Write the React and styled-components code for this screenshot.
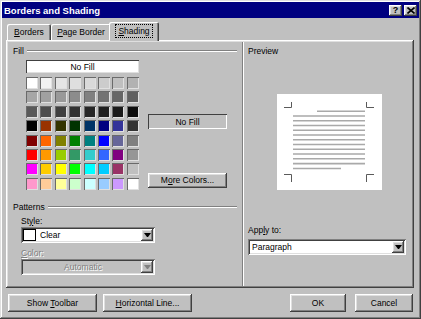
import React from 'react';
import styled, { createGlobalStyle, css } from 'styled-components';

const GlobalStyle = createGlobalStyle`
  html, body {
    margin: 0;
    padding: 0;
    background: #c0c0c0;
  }
  body {
    font-family: "Liberation Sans", Arial, sans-serif;
  }
`;

// classic 3d bevels
const raised = css`
  box-shadow: inset -1px -1px #404040, inset 1px 1px #fff,
    inset -2px -2px #808080, inset 2px 2px #dfdfdf;
`;

const sunken = css`
  box-shadow: inset 1px 1px #808080, inset -1px -1px #fff,
    inset 2px 2px #404040, inset -2px -2px #dfdfdf;
`;

const Window = styled.div`
  width: 421px;
  height: 319px;
  box-sizing: border-box;
  padding: 2px;
  background: #c0c0c0;
  box-shadow: inset -1px -1px #404040, inset 1px 1px #dfdfdf,
    inset -2px -2px #808080, inset 2px 2px #fff;
  display: flex;
  flex-direction: column;
  font-size: 8.5px;
  color: #000;
`;

const TitleBar = styled.div`
  height: 16px;
  background: #000080;
  color: #fff;
  display: flex;
  align-items: center;
  padding: 0 2px;
  font-size: 9.5px;
  font-weight: bold;
`;

const Title = styled.span`
  flex: 1;
`;

const CaptionButton = styled.div`
  width: 13px;
  height: 11px;
  margin-left: ${p => p.$gap || 0}px;
  background: #c0c0c0;
  ${raised};
  color: #000;
  font-size: 9px;
  font-weight: bold;
  display: flex;
  align-items: center;
  justify-content: center;
`;

const TabStrip = styled.div`
  height: 18px;
  margin: 4px 0 0 5px;
  display: flex;
  align-items: flex-end;
  position: relative;
  z-index: 1;
`;

const Tab = styled.div`
  width: ${p => p.$w}px;
  height: ${p => (p.$active ? 19 : 16)}px;
  margin: 0 ${p => (p.$active ? -2 : 0)}px ${p => (p.$active ? -1 : 0)}px
    ${p => (p.$active ? -2 : 0)}px;
  box-sizing: border-box;
  background: #c0c0c0;
  border-radius: 2px 2px 0 0;
  box-shadow: inset 1px 1px #fff, inset -1px 0 #404040, inset -2px 0 #808080;
  display: flex;
  align-items: center;
  justify-content: center;
  padding-bottom: ${p => (p.$active ? 1 : 0)}px;
`;

const FocusLabel = styled.span`
  outline: 1px dotted #000;
  padding: 1px 2px;
`;

const TabPanel = styled.div`
  margin-left: 4px;
  width: 408px;
  height: 248px;
  box-sizing: border-box;
  ${raised};
  display: flex;
`;

const LeftPane = styled.div`
  width: 236px;
  box-sizing: border-box;
  padding: 6px 3px 0 7px;
  display: flex;
  flex-direction: column;
`;

const RightPane = styled.div`
  flex: 1;
  margin: 2px 2px 2px 0;
  border-left: 1px solid #808080;
  box-shadow: inset 1px 0 #fff;
  padding: 4px 0 0 5px;
  display: flex;
  flex-direction: column;
`;

const GroupHeading = styled.div`
  height: 10px;
  margin-top: ${p => p.$mt || 0}px;
  display: flex;
  align-items: center;
  gap: 3px;
`;

const Rule = styled.div`
  flex: 1;
  margin-right: 2px;
  border-top: 1px solid #808080;
  border-bottom: 1px solid #fff;
`;

const FillBody = styled.div`
  margin-top: 4px;
  padding-left: 13px;
  display: flex;
`;

const SwatchColumn = styled.div`
  width: 113px;
  display: flex;
  flex-direction: column;
`;

const NoFillButton = styled.div`
  height: 13px;
  background: #fff;
  box-shadow: inset 1px 1px #404040, inset -1px -1px #dfdfdf;
  display: flex;
  align-items: center;
  justify-content: center;
`;

const SwatchGrid = styled.div`
  margin-top: 4px;
  display: grid;
  grid-template-columns: repeat(8, 12px);
  grid-auto-rows: 12px;
  gap: 2.4px;
`;

const Swatch = styled.div`
  background: ${p => p.$color};
  box-shadow: inset 1px 1px #6a6a6a, inset -1px -1px #e0e0e0;
`;

const SideColumn = styled.div`
  width: 79px;
  margin-left: 9px;
  padding-top: 54px;
  display: flex;
  flex-direction: column;
`;

const NoFillDisplay = styled.div`
  height: 15px;
  box-shadow: inset 1px 1px #404040, inset -1px -1px #fff;
  display: flex;
  align-items: center;
  justify-content: center;
`;

const PushButton = styled.div`
  width: ${p => (p.$w ? `${p.$w}px` : 'auto')};
  height: ${p => p.$h || 18}px;
  margin-top: ${p => (p.$auto ? 'auto' : '0')};
  margin-bottom: ${p => p.$mb || 0}px;
  margin-left: ${p => p.$ml || 0}px;
  box-sizing: border-box;
  background: #c0c0c0;
  ${raised};
  display: flex;
  align-items: center;
  justify-content: center;
`;

const SubBlock = styled.div`
  padding-left: 8px;
  display: flex;
  flex-direction: column;
`;

const FieldLabel = styled.div`
  height: 10px;
  margin-top: ${p => p.$mt || 0}px;
  display: flex;
  align-items: center;
  color: ${p => (p.$disabled ? '#808080' : '#000')};
  text-shadow: ${p => (p.$disabled ? '1px 1px #fff' : 'none')};
`;

const Combo = styled.div`
  width: ${p => p.$w}px;
  height: 16px;
  margin-top: ${p => p.$mt || 0}px;
  box-sizing: border-box;
  padding: 2px;
  background: ${p => (p.$disabled ? '#c0c0c0' : '#fff')};
  ${sunken};
  display: flex;
  align-items: center;
`;

const ComboText = styled.span`
  flex: 1;
  padding-left: ${p => p.$pl || 2}px;
  text-align: ${p => (p.$center ? 'center' : 'left')};
  color: ${p => (p.$disabled ? '#808080' : '#000')};
  text-shadow: ${p => (p.$disabled ? '1px 1px #fff' : 'none')};
`;

const PatternSwatch = styled.div`
  width: 11px;
  height: 10px;
  margin-left: 0;
  background: #fff;
  border: 1px solid #000;
`;

const DropButton = styled.div`
  width: 12px;
  height: 12px;
  background: #c0c0c0;
  ${raised};
  display: flex;
  align-items: center;
  justify-content: center;
`;

const Arrow = styled.div`
  width: 1px;
  height: 0;
  border-left: 3px solid transparent;
  border-right: 3px solid transparent;
  border-top: 4px solid ${p => (p.$disabled ? '#808080' : '#000')};
`;

const PreviewPage = styled.div`
  width: 105px;
  height: 96px;
  margin: 38px 0 0 29px;
  background: #fff;
`;

const ButtonRow = styled.div`
  margin-top: 6px;
  padding: 0 6px;
  display: flex;
`;

const Spacer = styled.div`
  flex: 1;
`;

const grays = [
  '#ffffff', '#f2f2f2', '#e5e5e5', '#dfdfdf', '#d9d9d9', '#cccccc', '#bfbfbf', '#b2b2b2',
  '#a6a6a6', '#a0a0a0', '#999999', '#8c8c8c', '#808080', '#737373', '#666666', '#606060',
  '#595959', '#4d4d4d', '#404040', '#333333', '#262626', '#202020', '#1a1a1a', '#0d0d0d',
];

const colors = [
  '#000000', '#993300', '#333300', '#003300', '#003366', '#000080', '#333399', '#333333',
  '#800000', '#ff6600', '#808000', '#008000', '#008080', '#0000ff', '#666699', '#808080',
  '#ff0000', '#ff9900', '#99cc00', '#339966', '#33cccc', '#3366ff', '#800080', '#969696',
  '#ff00ff', '#ffcc00', '#ffff00', '#00ff00', '#00ffff', '#00ccff', '#993366', '#c0c0c0',
  '#ff99cc', '#ffcc99', '#ffff99', '#ccffcc', '#ccffff', '#99ccff', '#cc99ff', '#ffffff',
];

const CloseGlyph = () => (
  <svg width="8" height="7" viewBox="0 0 8 7">
    <path d="M0.5 0.5 L7.5 6.5 M7.5 0.5 L0.5 6.5" stroke="#000" strokeWidth="1.6" />
  </svg>
);

const lineYs = [22, 26.8, 31.5, 36.3, 41, 45.8, 50.5, 55.3, 60, 64.8, 69.6];

const PageDrawing = () => (
  <svg width="105" height="96" viewBox="0 0 105 96">
    <g stroke="#5a5a5a" strokeWidth="1" fill="none">
      <path d="M7 13.5 H14.5 V8" />
      <path d="M89.5 8 V13.5 H97" />
      <path d="M7 80.5 H14.5 V88" />
      <path d="M89.5 88 V80.5 H97" />
    </g>
    <g stroke="#a9a9a9" strokeWidth="1.6">
      <line x1="40" y1="17.2" x2="88" y2="17.2" />
      {lineYs.map(y => (
        <line key={y} x1="16" y1={y} x2="88" y2={y} />
      ))}
      <line x1="16" y1="74.5" x2="64" y2="74.5" />
    </g>
  </svg>
);

export default function App() {
  return (
    <>
      <GlobalStyle />
      <Window>
        <TitleBar>
          <Title>Borders and Shading</Title>
          <CaptionButton>?</CaptionButton>
          <CaptionButton $gap={2}>
            <CloseGlyph />
          </CaptionButton>
        </TitleBar>

        <TabStrip>
          <Tab $w={44}>
            <span><u>B</u>orders</span>
          </Tab>
          <Tab $w={60}>
            <span><u>P</u>age Border</span>
          </Tab>
          <Tab $w={50} $active>
            <FocusLabel><u>S</u>hading</FocusLabel>
          </Tab>
        </TabStrip>

        <TabPanel>
          <LeftPane>
            <GroupHeading>
              <span>Fill</span>
              <Rule />
            </GroupHeading>
            <FillBody>
              <SwatchColumn>
                <NoFillButton>No Fill</NoFillButton>
                <SwatchGrid>
                  {[...grays, ...colors].map((c, i) => (
                    <Swatch key={i} $color={c} />
                  ))}
                </SwatchGrid>
              </SwatchColumn>
              <SideColumn>
                <NoFillDisplay>No Fill</NoFillDisplay>
                <PushButton $h={15} $auto $mb={2}>
                  <span>M<u>o</u>re Colors...</span>
                </PushButton>
              </SideColumn>
            </FillBody>

            <GroupHeading $mt={12}>
              <span>Patterns</span>
              <Rule />
            </GroupHeading>
            <SubBlock>
              <FieldLabel $mt={4}>
                <span>St<u>y</u>le:</span>
              </FieldLabel>
              <Combo $w={134} $mt={1}>
                <PatternSwatch />
                <ComboText $pl={4}>Clear</ComboText>
                <DropButton>
                  <Arrow />
                </DropButton>
              </Combo>
              <FieldLabel $mt={5} $disabled>
                <span><u>C</u>olor:</span>
              </FieldLabel>
              <Combo $w={134} $mt={1} $disabled>
                <ComboText $center $disabled>Automatic</ComboText>
                <DropButton>
                  <Arrow $disabled />
                </DropButton>
              </Combo>
            </SubBlock>
          </LeftPane>

          <RightPane>
            <FieldLabel>Preview</FieldLabel>
            <PreviewPage>
              <PageDrawing />
            </PreviewPage>
            <FieldLabel $mt={35}>
              <span>App<u>l</u>y to:</span>
            </FieldLabel>
            <Combo $w={158} $mt={4}>
              <ComboText>Paragraph</ComboText>
              <DropButton>
                <Arrow />
              </DropButton>
            </Combo>
          </RightPane>
        </TabPanel>

        <ButtonRow>
          <PushButton $w={89}>
            <span>Show <u>T</u>oolbar</span>
          </PushButton>
          <PushButton $w={89} $ml={6}>
            <span><u>H</u>orizontal Line...</span>
          </PushButton>
          <Spacer />
          <PushButton $w={56}>OK</PushButton>
          <PushButton $w={58} $ml={9}>Cancel</PushButton>
        </ButtonRow>
      </Window>
    </>
  );
}
